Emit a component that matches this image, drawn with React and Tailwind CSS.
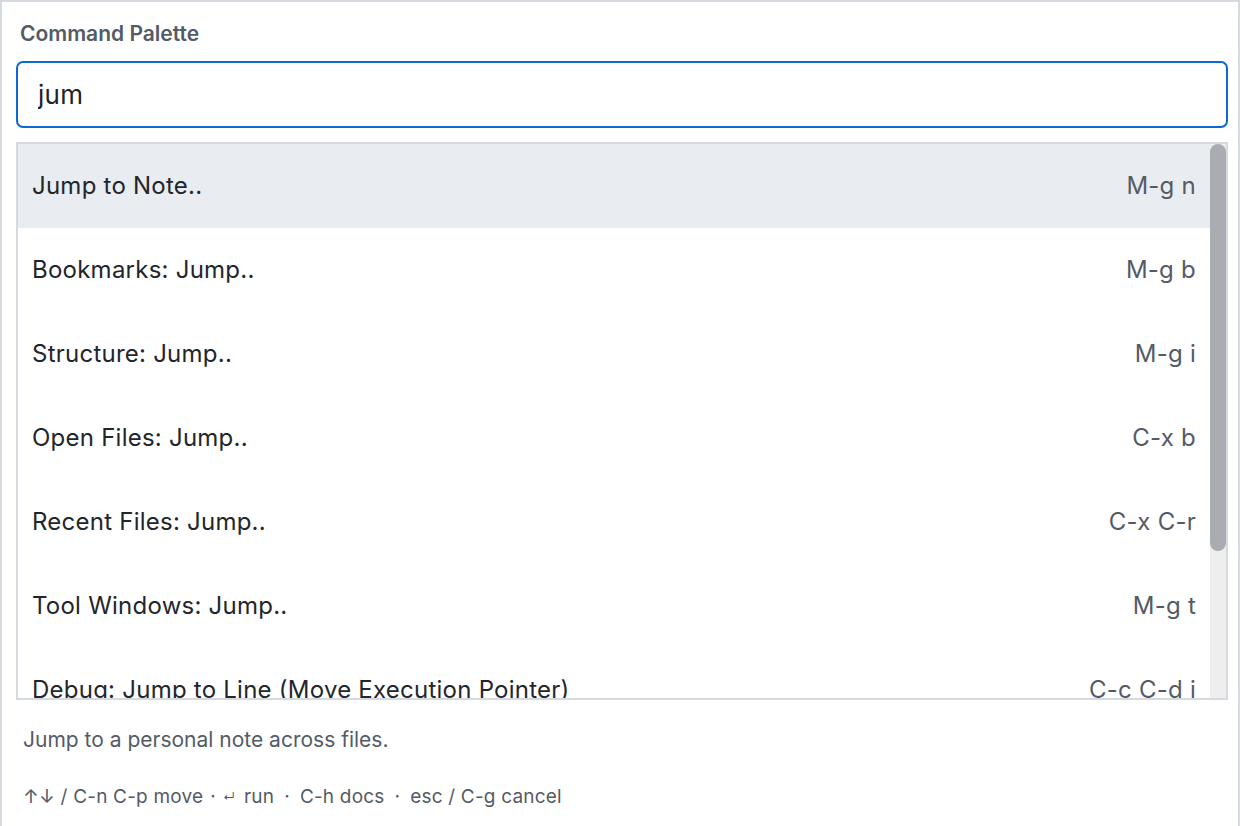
import React, { useState } from "react";

const commands = [
  { label: "Jump to Note..", keys: "M-g n" },
  { label: "Bookmarks: Jump..", keys: "M-g b" },
  { label: "Structure: Jump..", keys: "M-g i" },
  { label: "Open Files: Jump..", keys: "C-x b" },
  { label: "Recent Files: Jump..", keys: "C-x C-r" },
  { label: "Tool Windows: Jump..", keys: "M-g t" },
  { label: "Debug: Jump to Line (Move Execution Pointer)", keys: "C-c C-d j" },
];

export default function App() {
  const [query, setQuery] = useState("jum");
  const [selected] = useState(0);

  return (
    <div
      className="w-[1240px] h-[826px] bg-white overflow-hidden border-t-2 border-r-2 border-l-2 border-[#d5d9e0] text-[#1f2328]"
      style={{ fontFamily: "Inter, 'Noto Sans', sans-serif" }}
    >
      <div className="pl-[14px] pr-[10px] pt-[20px]">
        <div className="pl-[4px] text-[21px] leading-[24px] font-semibold text-[#545b66]">
          Command Palette
        </div>

        <input
          value={query}
          onChange={e => setQuery(e.target.value)}
          className="mt-[15px] w-full h-[67px] px-[20px] border-2 border-[#0b68d4] rounded-[7px] text-[26px] tracking-[0.01em] text-[#1f2328] outline-none"
        />

        <div className="mt-[14px] h-[558px] border-2 border-[#d5d9e0] flex overflow-hidden">
          <div className="flex-1 overflow-hidden">
            {commands.map((c, i) => (
              <div
                key={c.label}
                className={
                  "h-[84px] shrink-0 flex items-center justify-between pl-[14px] pr-[14px] text-[24px] tracking-[0.01em] " +
                  (i === selected ? "bg-[#e9ecf1]" : "bg-white")
                }
              >
                <span className="text-[#22262b]">{c.label}</span>
                <span className="text-[#545b66]">{c.keys}</span>
              </div>
            ))}
          </div>
          <div className="w-[16px] bg-[#eeeeee]">
            <div className="h-[407px] bg-[#a9adb1] rounded-full" />
          </div>
        </div>

        <div className="mt-[28px] pl-[7px] text-[21px] leading-[24px] text-[#545b66]">
          Jump to a personal note across files.
        </div>

        <div className="mt-[34px] pl-[7px] text-[19px] leading-[22px] text-[#545b66] tracking-[0.01em] flex items-center">
          <span>↑↓ / C-n C-p move</span>
          <span className="mx-[7px]">·</span>
          <span className="text-[12px] mr-[9px]">↵</span>
          <span>run</span>
          <span className="mx-[10px]">·</span>
          <span>C-h docs</span>
          <span className="mx-[10px]">·</span>
          <span>esc / C-g cancel</span>
        </div>
      </div>
    </div>
  );
}
